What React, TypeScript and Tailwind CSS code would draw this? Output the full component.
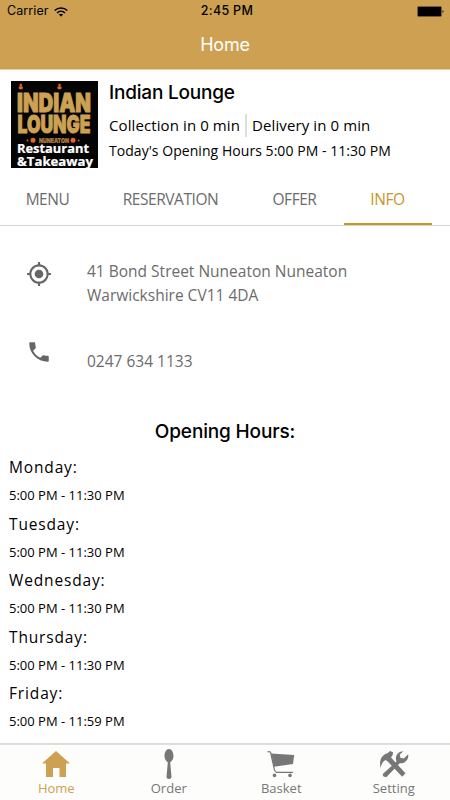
import { useState } from "react";
import { MdLocalPhone, MdMyLocation } from "react-icons/md";

const tabs = [
  { label: "MENU", width: "w-[96px]" },
  { label: "RESERVATION", width: "w-[150px]" },
  { label: "OFFER", width: "w-[98px]" },
  { label: "INFO", width: "w-[88px]" },
];

const openingHours = [
  { day: "Monday", hours: "5:00 PM - 11:30 PM" },
  { day: "Tuesday", hours: "5:00 PM - 11:30 PM" },
  { day: "Wednesday", hours: "5:00 PM - 11:30 PM" },
  { day: "Thursday", hours: "5:00 PM - 11:30 PM" },
  { day: "Friday", hours: "5:00 PM - 11:59 PM" },
];

function WifiIcon() {
  return (
    <svg width="14" height="10" viewBox="0 0 14 10" fill="none" stroke="black" strokeWidth="1.5">
      <path d="M0.7 3.6C4.2 0 9.8 0 13.3 3.6" />
      <path d="M3 6C5.3 3.7 8.7 3.7 11 6" />
      <path d="M7 9.8L4.9 7.6C6.1 6.5 7.9 6.5 9.1 7.6Z" fill="black" stroke="none" />
    </svg>
  );
}

function BatteryIcon() {
  return (
    <svg width="27" height="11" viewBox="0 0 27 11">
      <rect x="0.5" y="0.5" width="24" height="10" rx="1.2" fill="black" stroke="#7d6130" strokeWidth="0.8" />
      <path d="M25.6 4L26.8 5.5L25.6 7Z" fill="black" />
    </svg>
  );
}

function RestaurantLogo() {
  return (
    <svg width="87" height="87" viewBox="0 0 87 87" className="shrink-0 overflow-visible">
      <rect width="87" height="87" fill="#050404" />
      <g fill="#e8622c">
        <rect x="8.700" y="2.800" width="2.200" height="2.200" />
        <rect x="7.800" y="5.300" width="4" height="3" rx="1" />
        <rect x="47.400" y="2.800" width="2.200" height="2.200" />
        <rect x="46.500" y="5.300" width="4" height="3" rx="1" />
        <circle cx="16.500" cy="59.500" r="0.900" />
        <circle cx="22" cy="59.300" r="2.500" />
        <circle cx="62" cy="59.300" r="2.500" />
        <circle cx="67.600" cy="59.500" r="0.900" />
      </g>
      <g fill="#cda154" stroke="#cda154" fontFamily="Inter" fontWeight="900">
        <text x="6" y="30.500" fontSize="25.500" strokeWidth="0.900" textLength="74" lengthAdjust="spacingAndGlyphs">INDIAN</text>
        <text x="6.500" y="52.300" fontSize="24.500" strokeWidth="0.900" textLength="73" lengthAdjust="spacingAndGlyphs">LOUNGE</text>
        <text x="28" y="61.800" fontSize="6.800" strokeWidth="0.200" fill="#a8743a" textLength="30" lengthAdjust="spacingAndGlyphs">NUNEATON</text>
      </g>
      <g fill="white" fontFamily="Open Sans" fontWeight="700" stroke="white" strokeWidth="0.200">
        <text x="6" y="71.500" fontSize="12" textLength="72" lengthAdjust="spacingAndGlyphs">Restaurant</text>
        <text x="6" y="84.500" fontSize="12" textLength="76" lengthAdjust="spacingAndGlyphs">&amp;Takeaway</text>
      </g>
    </svg>
  );
}

function HomeIcon() {
  return (
    <svg width="32" height="32" viewBox="0 0 32 32" fill="#cda052">
      <path d="M16 3L30 15.500H26V29H19.500V20H13V29H6V15.500H2Z" />
    </svg>
  );
}

function SpoonIcon() {
  return (
    <svg width="32" height="32" viewBox="0 0 32 32" fill="#777">
      <path d="M16 1C18.800 1 20.500 4.500 20.500 8C20.500 11 19 13.200 17.200 14.300L18.500 29C18.600 31.700 13.400 31.700 13.500 29L14.800 14.300C13 13.200 11.500 11 11.500 8C11.500 4.500 13.200 1 16 1Z" />
    </svg>
  );
}

function BasketIcon() {
  return (
    <svg width="32" height="32" viewBox="0 0 32 32" fill="#777">
      <path d="M6 5.500L29.200 7L28 16L9 18.800Z" />
      <path d="M2.500 3.600L5.500 4L9.500 22.300L11.500 24.300H28" fill="none" stroke="#777" strokeWidth="1.200" />
      <circle cx="9.500" cy="27.400" r="1.800" />
      <circle cx="25" cy="27.400" r="1.800" />
    </svg>
  );
}

function SettingIcon() {
  return (
    <svg width="32" height="32" viewBox="0 0 32 32" fill="#777">
      {/* wrench */}
      <path d="M5 25.800L18.500 13.500C16.500 8.500 19.500 3.300 25.500 3.200L21.800 6.500L22.300 9.800L25.800 10.500L30.200 6.200C31 12 26.500 16 21.700 15.200L8.800 28.700C6.500 29.500 4.200 28 5 25.800Z" />
      {/* hammer */}
      <path d="M2.500 20C1 12 3.500 7 9.500 5.300L12 3L15 4.200L14.700 7L13 9.500L27.500 25.300L24.200 28.700L9.500 13.300L7.500 12C4.800 13.500 3.500 16 2.500 20Z" />
    </svg>
  );
}

const navItems = [
  { label: "Home", Icon: HomeIcon },
  { label: "Order", Icon: SpoonIcon },
  { label: "Basket", Icon: BasketIcon },
  { label: "Setting", Icon: SettingIcon },
];

export default function App() {
  const [activeTab, setActiveTab] = useState("INFO");
  const [activeNav, setActiveNav] = useState("Home");

  return (
    <div className="flex h-[800px] w-[450px] flex-col overflow-hidden bg-white font-['Open_Sans',sans-serif] text-black">
      <header className="h-[70px] shrink-0 border-b border-[#e6d0aa] bg-[#cda052] font-['Inter',sans-serif]">
        <div className="grid h-[23px] grid-cols-3 items-center pr-[6px] pl-[7px] text-[13px]">
          <div className="flex items-center gap-[5px]">
            <span className="text-[12.5px] tracking-[0.1px]">Carrier</span>
            <WifiIcon />
          </div>
          <p className="pl-[3px] text-center text-[12.5px] font-medium tracking-[0.3px]">2:45 PM</p>
          <div className="flex justify-end">
            <BatteryIcon />
          </div>
        </div>
        <h1 className="text-center text-[18px] leading-[44px] tracking-[-0.2px] text-white">Home</h1>
      </header>

      <section className="flex h-[103px] shrink-0 gap-[11px] pt-[11px] pl-[11px]">
        <RestaurantLogo />
        <div className="whitespace-nowrap">
          <h2 className="font-['Inter',sans-serif] text-[19px] leading-[23px] font-medium tracking-[-0.2px]">Indian Lounge</h2>
          <div className="mt-[10px] flex items-center text-[15px] leading-[23px] tracking-[0.1px]">
            <p className="border-r-2 border-[#ddd] pr-[5px]">Collection in 0 min</p>
            <p className="pl-[5px]">Delivery in 0 min</p>
          </div>
          <p className="mt-[4px] text-[14px] leading-[20px] tracking-[0.05px]">Today's Opening Hours 5:00 PM - 11:30 PM</p>
        </div>
      </section>

      <nav className="flex h-[53px] shrink-0 border-b border-[#d4d4d4]">
        {tabs.map(({ label, width }) => (
          <button
            key={label}
            onClick={() => setActiveTab(label)}
            className={`${width} border-b-2 pt-[3px] pr-[1px] text-[15.5px] tracking-[-0.45px] ${
              activeTab === label ? "border-[#c8952a] text-[#c8952a]" : "border-transparent text-[#6c6c6c]"
            }`}
          >
            {label}
          </button>
        ))}
      </nav>

      <main className="flex-1 overflow-hidden">
        <div className="flex pt-[33px] pl-[26px] text-[15.5px] leading-[24px] text-[#6c6c6c]">
          <MdMyLocation className="mt-[2px] mr-[35px] size-[26px] text-[#666]" />
          <p>
            41 Bond Street Nuneaton Nuneaton
            <br />
            Warwickshire CV11 4DA
          </p>
        </div>
        <div className="mt-[32px] flex pl-[26px] text-[15.5px] leading-[24px] text-[#6c6c6c]">
          <MdLocalPhone className="mr-[35px] size-[26px] text-[#666]" />
          <p className="mt-[10px]">0247 634 1133</p>
        </div>

        <h2 className="mt-[47px] text-center font-['Inter',sans-serif] text-[19px] leading-[24px] font-medium tracking-[-0.15px]">
          Opening Hours:
        </h2>
        <ul className="mt-[11px] pl-[9px]">
          {openingHours.map(({ day, hours }) => (
            <li key={day} className="h-[56.5px]">
              <p className="text-[15.5px] leading-[24px] tracking-[0.85px]">{day}:</p>
              <p className="mt-[4px] text-[13px] leading-[24px]">{hours}</p>
            </li>
          ))}
        </ul>
      </main>

      <footer className="grid h-[57px] shrink-0 grid-cols-4 border-t-2 border-[#dedede] bg-[#fdfdfb]">
        {navItems.map(({ label, Icon }) => (
          <button
            key={label}
            onClick={() => setActiveNav(label)}
            className={`flex flex-col items-center pt-[3px] text-[13px] leading-[17px] ${
              activeNav === label ? "text-[#cda052]" : "text-[#777]"
            }`}
          >
            <Icon />
            {label}
          </button>
        ))}
      </footer>
    </div>
  );
}
